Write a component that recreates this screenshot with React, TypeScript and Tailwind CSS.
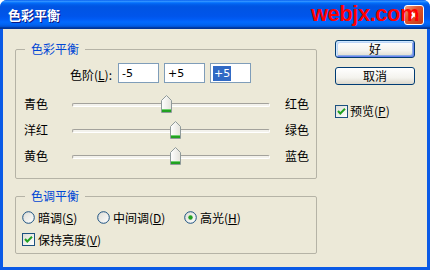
import React from 'react';

const cjk = "font-['Noto_Sans_CJK_SC','Liberation_Sans',sans-serif]";

const Thumb: React.FC<{ left: number }> = ({ left }) => (
  <svg
    width="11"
    height="18"
    viewBox="0 0 11 18"
    className="absolute top-0"
    style={{ left }}
  >
    <defs>
      <linearGradient id="thumbFill" x1="0" y1="0" x2="1" y2="0">
        <stop offset="0" stopColor="#ffffff" />
        <stop offset="1" stopColor="#e4e3dc" />
      </linearGradient>
    </defs>
    <path d="M0.5 5.5 L5.5 0.5 L10.5 5.5 V17.5 H0.5 Z" fill="url(#thumbFill)" stroke="#8f9a9a" />
    <rect x="1" y="14" width="9" height="3" fill="#21a121" />
    <rect x="1" y="14" width="9" height="1" fill="#6fd06f" />
  </svg>
);

const SliderRow: React.FC<{ left: string; right: string; value: number }> = ({ left, right, value }) => {
  const trackWidth = 198;
  const center = ((value + 100) / 200) * trackWidth;
  return (
    <div className="flex h-[26px] items-center pl-[8px]">
      <span className="w-[48px] text-[12px] leading-[14px]">{left}</span>
      <div className="relative h-[18px] w-[198px]">
        <div className="absolute left-0 right-0 top-[8px] h-[4px] rounded-[2px] border border-[#a3a29c] border-b-white border-r-white bg-[#f3f2ec]" />
        <Thumb left={Math.round(center - 5.5)} />
      </div>
      <span className="ml-[15px] text-[12px] leading-[14px]">{right}</span>
    </div>
  );
};

const CheckBox: React.FC<{ checked?: boolean }> = ({ checked }) => (
  <svg width="13" height="13" viewBox="0 0 13 13" className="shrink-0">
    <defs>
      <linearGradient id="cbFill" x1="0" y1="0" x2="1" y2="1">
        <stop offset="0" stopColor="#dcdcd5" />
        <stop offset="1" stopColor="#ffffff" />
      </linearGradient>
    </defs>
    <rect x="0.5" y="0.5" width="12" height="12" fill="url(#cbFill)" stroke="#1c5180" />
    {checked && (
      <path d="M3 6 L5.3 8.5 L10 3.8" fill="none" stroke="#21a121" strokeWidth="2" />
    )}
  </svg>
);

const Radio: React.FC<{ checked?: boolean }> = ({ checked }) => (
  <svg width="13" height="13" viewBox="0 0 13 13" className="shrink-0">
    <defs>
      <linearGradient id="rdFill" x1="0" y1="0" x2="1" y2="1">
        <stop offset="0" stopColor="#dcdcd5" />
        <stop offset="1" stopColor="#ffffff" />
      </linearGradient>
    </defs>
    <circle cx="6.5" cy="6.5" r="5.8" fill="url(#rdFill)" stroke="#1c5180" />
    {checked && <circle cx="6.5" cy="6.5" r="2.2" fill="#21a121" />}
  </svg>
);

const Key: React.FC<{ label: string; k: string; tail?: string }> = ({ label, k, tail = '' }) => (
  <span className="text-[12px] leading-[14px] whitespace-nowrap">
    {label}(<span className="underline underline-offset-[1px]">{k}</span>){tail}
  </span>
);

const NumBox: React.FC<{ value: string; selected?: boolean }> = ({ value, selected }) => (
  <div className="flex h-[20px] w-[41px] items-center border border-[#7f9db9] bg-white pl-[2px] font-['DejaVu_Sans',sans-serif] text-[11px]">
    {selected ? (
      <span className="bg-[#316ac5] px-[1px] leading-[15px] text-white">{value}</span>
    ) : (
      <span className="px-[1px] leading-[15px]">{value}</span>
    )}
  </div>
);

const XpButton: React.FC<{ label: string; primary?: boolean }> = ({ label, primary }) => (
  <button
    className={`flex h-[18px] w-[80px] items-center justify-center rounded-[3px] border border-[#003c74] bg-[linear-gradient(180deg,#ffffff_0%,#f4f3ee_60%,#dcd8cc_100%)] text-[12px] leading-[14px] text-black ${
      primary ? 'shadow-[inset_1px_1px_0_#cee7ff,inset_-1px_-1px_0_#6982ee,inset_2px_2px_0_#bcd4f6,inset_-2px_-2px_0_#89ade4]' : ''
    }`}
  >
    {label}
  </button>
);

export default function App() {
  return (
    <div className={`flex h-[270px] w-[430px] flex-col overflow-hidden rounded-t-[7px] bg-[#0a5ae6] text-black ${cjk}`}>
      {/* title bar */}
      <div className="relative flex h-[29px] shrink-0 items-center bg-[linear-gradient(180deg,#0058ee_0%,#3593ff_4%,#288eff_6%,#127dff_8%,#036ffc_10%,#0262ee_14%,#0057e5_20%,#0054e3_24%,#0055eb_56%,#005bf5_66%,#026afe_76%,#0062ef_86%,#0052d6_92%,#0040ab_94%,#003092_100%)]">
        <span className="pl-[8px] text-[13px] font-bold leading-[15px] text-white [text-shadow:1px_1px_0_#0a1883]">
          色彩平衡
        </span>
        <div className="ml-auto mr-[6px] flex h-[20px] w-[20px] items-center justify-center rounded-[3px] border border-white bg-[linear-gradient(135deg,#f0a080_0%,#e0562e_40%,#c83a14_100%)]">
          <svg width="10" height="10" viewBox="0 0 10 10">
            <path d="M1.5 1.5 L8.5 8.5 M8.5 1.5 L1.5 8.5" stroke="white" strokeWidth="2" />
          </svg>
        </div>
        <span className="absolute left-[311px] top-[1px] font-['Liberation_Sans',sans-serif] text-[22px] font-bold leading-[26px] text-[#ff0000] tracking-[-0.5px]">
          webjx.com
        </span>
      </div>

      {/* body */}
      <div className="mx-[3px] mb-[3px] flex flex-1 bg-[#ece9d8]">
        <div className="flex flex-col pl-[12px] pt-[13px]">
          <fieldset className="h-[137px] w-[302px] rounded-[2px] border border-[#b5b3a6]">
            <legend className="ml-[9px] px-[6px] text-[12px] leading-[14px] text-[#0046d5]">色彩平衡</legend>
            <div className="flex h-[20px] items-center pl-[54px] mt-[7px]">
              <span className="w-[48px]">
                <Key label="色阶" k="L" tail=":" />
              </span>
              <div className="flex gap-[5px]">
                <NumBox value="-5" />
                <NumBox value="+5" />
                <NumBox value="+5" selected />
              </div>
            </div>
            <div className="mt-[8px] flex flex-col">
              <SliderRow left="青色" right="红色" value={-5} />
              <SliderRow left="洋红" right="绿色" value={5} />
              <SliderRow left="黄色" right="蓝色" value={5} />
            </div>
          </fieldset>

          <fieldset className="mt-[10px] h-[65px] w-[302px] rounded-[2px] border border-[#b5b3a6]">
            <legend className="ml-[9px] px-[6px] text-[12px] leading-[14px] text-[#0046d5]">色调平衡</legend>
            <div className="mt-[8px] flex h-[13px] items-center pl-[6px]">
              <div className="flex w-[75px] items-center gap-[3px]">
                <Radio />
                <Key label="暗调" k="S" />
              </div>
              <div className="flex w-[87px] items-center gap-[3px]">
                <Radio />
                <Key label="中间调" k="D" />
              </div>
              <div className="flex items-center gap-[3px]">
                <Radio checked />
                <Key label="高光" k="H" />
              </div>
            </div>
            <div className="mt-[9px] flex h-[13px] items-center gap-[3px] pl-[6px]">
              <CheckBox checked />
              <Key label="保持亮度" k="V" />
            </div>
          </fieldset>
        </div>

        <div className="ml-[18px] flex flex-col pt-[11px]">
          <XpButton label="好" primary />
          <div className="mt-[9px]">
            <XpButton label="取消" />
          </div>
          <div className="mt-[19px] flex items-center gap-[2px]">
            <CheckBox checked />
            <Key label="预览" k="P" />
          </div>
        </div>
      </div>
    </div>
  );
}
